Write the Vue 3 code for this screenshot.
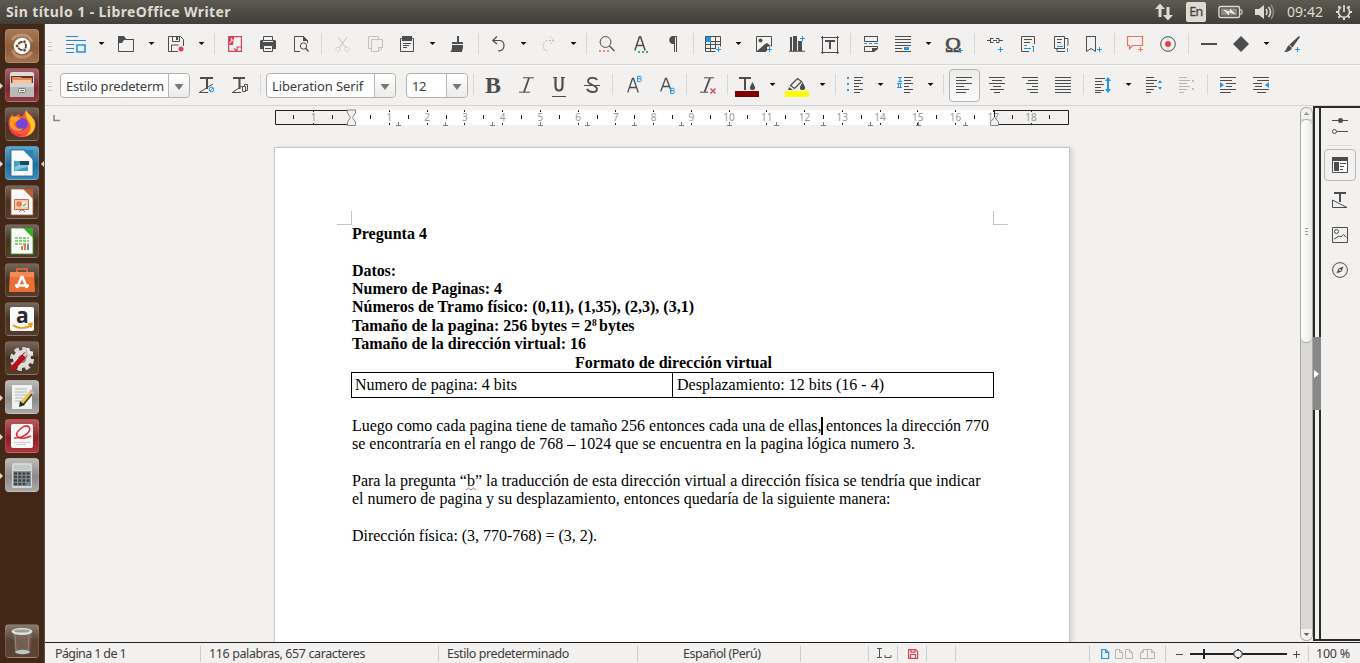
<script setup>
const D = '#4d4d4d'
const B = '#1e96eb'
const R = '#da4453'
const G = '#c2c1c0'

// Spreads a label over its nominal width through letter spacing.
const vFit = {
  mounted(el, { value }) {
    const natural = el.getBoundingClientRect().width
    el.style.letterSpacing = (value - natural) / el.textContent.length + 'px'
  }
}

const path = (d, c = D, w = 1) => `<path d="${d}" fill="none" stroke="${c}" stroke-width="${w}"/>`
const fill = (d, c = D) => `<path d="${d}" fill="${c}"/>`
const glyph = (t, x, y, size, c = D, extra = '', fam = 'Liberation Sans') =>
  `<text x="${x}" y="${y}" font-size="${size}" font-family="${fam}, sans-serif" fill="${c}" ${extra}>${t}</text>`
const plus = (x, y, c = B) => fill(`M${x - 2} ${y}h5v1h-5zM${x} ${y - 2}h1v5h-1z`, c)
const bars = (list, c = D) => fill(list.map(([x, y, w]) => `M${x} ${y}h${w}v1h-${w}z`).join(''), c)

// Turns absolute starts into gaps between neighbours.
function flow(start, list) {
  let end = start
  return list.map(([kind, x, w, body]) => {
    const item = { kind, w, body, gap: x - end }
    end = x + w
    return item
  })
}
const sep = (x) => ['sep', x, 1]
const arr = (x) => ['arrow', x - 3, 6]
const ic = (x, w, body) => ['icon', x, w, body]

const standard = flow(45, [
  ['grip', 48, 4],
  ic(66, 20, bars([[0, 0, 12], [0, 4, 20], [0, 8, 8], [0, 12, 8], [0, 16, 8]], '#2a88c8') + path('M11 9h8v7h-8z', B, 1.6)),
  arr(101.5),
  ic(118, 16, path('M.5 15.500V.5h5l2 3h8v12z') + fill('M0 0h6l2 3h8v1H6L4 7H0z')),
  arr(151.5),
  ic(168, 16, path('M10 15.500H.5V.5h12l3 3V10M4.500 .5v5h7v-5M3.500 15v-6h7') + fill('M8 1h2v3H8z') + `<circle cx="13" cy="13" r="2.500" fill="${R}"/>`),
  arr(201.5),
  sep(214),
  ic(228, 14, fill('M0 0h6v2L5 9H0z', R) + path('M5 .6h8.400v14.800H9.500L6 12.500M.6 8v7.400h8.500V11H13', R, 1.200) + path('M1.500 7.500c2-2 3-4 2-5s1.500 4 3.500 3', '#fff', .9)),
  ic(260, 16, path('M3.500 4V.5h9V4M3.500 9.500h9v6h-9zM5 12.500h6') + fill('M1 4h14l1 1v8h-3V9H3v4H0V5z') + fill('M3 5h10v1H3z', '#f2f1f0')),
  ic(294, 16, path('M6 15.500H.5V.5h9l4 4V7M9.500 .5v4h4') + fill('M9 0l5 5H9z') + `<circle cx="9.500" cy="10" r="3.200" fill="#f2f1f0" stroke="${D}"/>` + path('M11.500 12l3 3.500', D, 1.300)),
  sep(321),
  ic(335, 16, path('M3 1l8 11M12 1L4 12', G) + `<g fill="none" stroke="${G}" stroke-dasharray="1.500 1"><circle cx="3" cy="13.500" r="2.200"/><circle cx="12" cy="13.500" r="2.200"/></g>`),
  ic(368, 15, path('M3 12.500H.5V.5h10V3M3.500 15.500v-12h11v8l-4 4zM10.500 15v-3.500h4', G)),
  ic(400, 14, path('M.5 2.500h13v13H.5z') + fill('M2 0h10v5H2z') + bars([[3, 7, 8], [3, 9, 6], [3, 11, 4]])),
  arr(432.5),
  ic(450, 14, fill('M7 0h2v6h4v2H2V6h5zM2 9h11v2c0 2-1 3-1 5H0c2-1 2-4 2-7z')),
  sep(478),
  ic(492, 13, path('M5 .5L.7 4.500 5 8M1 4.500h6c3 0 5 2 5 5s-2 5.500-6 5.500', D, 1.200)),
  arr(523.5),
  ic(542, 13, `<path d="M8 .5l4.300 4L8 8M12 4.500H7c-4 0-6 2-6 5s2 5.500 5 5.500" fill="none" stroke="${G}" stroke-dasharray="2 1"/>`),
  arr(573.5),
  sep(586),
  ic(599, 17, `<circle cx="6.500" cy="6" r="5.400" fill="none" stroke="${D}"/>` + path('M10.500 10l5 5', D, 1.300) + fill('M0 14h2v2H0zM4 14h2v2H4zM8 14h2v2H8z', '#f08a6c')),
  ic(634, 15, path('M.8 14.500L5.500 .8h1L11.200 14.500M2.500 9.500h7', D, 1.500) + fill('M4 15h2v2H4zM8 15h2v2H8zM12 15h2v2h-2z', '#3bb17a')),
  ic(669, 9, fill('M4 0h4v16H7V1H6v15H5V8H4C-1 8-1 0 4 0z')),
  sep(693),
  ic(705, 17, path('M.5 .5h15v10M.5 .5v15h10M1 5.500h15M1 8.500h15M1 12.500h9M5.500 1v14M10.500 1v12') + fill('M1 1h5v5H1z', B) + plus(13, 13)),
  arr(738.5),
  ic(756, 17, path('M10 15.500H.5V.5h15v10') + '<circle cx="4.500" cy="4.500" r="2" fill="#4d4d4d"/>' + fill('M1 15l8-7 2-1 4 3-4 1v4z') + plus(13, 13)),
  ic(789, 17, fill('M1 1h2v14H1zM4 0h4v15H4zM9 5h4v10H9zM0 14.800h16v1H0z') + plus(13, 2)),
  ic(821, 18, path('M1.500 1.500h15v15h-15zM0 1.500h3M1.500 0v3M15 1.500h3M16.500 0v3M0 16.500h3M1.500 18v-3M15 16.500h3M16.500 18v-3') + fill('M4 4h10v2H10v7H8V6H4z')),
  sep(850),
  ic(864, 15, path('M.5 0v5.500h13V0M.5 .5h13M.5 10.500v5h8l5-3v-2z') + fill('M8 16v-4h6v1l-4 3z') + bars([[0, 7, 3], [5, 7, 3], [10, 7, 4]], B)),
  ic(895, 16, bars([[0, 0, 16], [0, 3, 16], [0, 6, 16], [0, 9, 16], [0, 12, 7], [0, 15, 16]]) + fill('M9 11h5v3H9z', B)),
  arr(928.5),
  ic(945, 20, glyph('Ω', 0, 15.500, 21, D, `textLength="16" lengthAdjust="spacingAndGlyphs" stroke="${D}" stroke-width=".7"`, 'Liberation Serif') + plus(15, 14)),
  sep(974),
  ic(987, 17, path('M0 4.500h3M3 2.500h3.500M3 6.500h3.500M3.500 2v5M6 4.500h4M9 2.500h3v4h-3M12 4.500h4') + plus(13, 13)),
  ic(1021, 15, path('M8 15.500H.5V.5h13V8') + bars([[3, 3, 8], [3, 6, 6]]) + bars([[3, 9, 3], [3, 12, 7]], B) + fill('M11 10h2v6h-1v-5h-1z', B)),
  ic(1054, 16, path('M11 12.500H.5V.5h10V12M3 12v3.500h8M11 2.500h3V9') + bars([[3, 3, 5], [3, 6, 4]]) + bars([[3, 10, 6]], B) + fill('M13 9h1v1h-1zM13 12h1v4h-1z', B)),
  ic(1086, 17, path('M.5 0v15.500l4.500-3 4.500 3V0M.5 .5h9') + plus(13, 13)),
  sep(1114),
  ic(1127, 17, path('M.5 .5h15v9H5.500L2.500 13V9.500h-2z', '#ee7352', 1.200) + plus(13, 13, '#ee7352')),
  ic(1160, 16, `<circle cx="8" cy="8" r="7.300" fill="none" stroke="${D}"/><circle cx="8" cy="8" r="3" fill="${R}"/>`),
  sep(1188),
  ic(1201, 16, fill('M0 7h16v2H0z')),
  ic(1233, 16, fill('M8 0l8 8-8 8-8-8z')),
  arr(1266.5),
  ic(1284, 17, fill('M15 0l1 1-7.500 10.500-3-3zM5 9l3 3c-1 2-3 4-8 4 2-1 2-4 5-7z') + plus(13, 13))
])

const left = bars([[0, 0, 16], [0, 3, 10], [0, 6, 16], [0, 9, 8], [0, 12, 13], [0, 15, 10]])
const half = bars([[0, 0, 8], [0, 3, 11], [0, 6, 8], [0, 9, 11], [0, 12, 8], [0, 15, 5]])

const format = flow(45, [
  ['grip', 48, 4],
  ['combo', 60, 130, { text: 'Estilo predeterm', tw: 98, field: 108 }],
  ic(199, 17, fill('M1 0h13v2H9v10H7V2H1z') + path('M1 15L14 7M0 15.500h9', D) + `<circle cx="12.500" cy="12.500" r="2.300" fill="none" stroke="${B}"/>` + path('M11 14l3-3', B)),
  ic(232, 17, fill('M1 0h12v2H8.500v10h-2V2H1z') + path('M1 15L10 9M0 15.500h9', D, 1) + path('M10.500 9.500h3v5h-3zM12.500 9V7.500h3v6h-2')),
  sep(260),
  ['combo', 266, 130, { text: 'Liberation Serif', tw: 91, field: 108 }],
  ['combo', 406, 62, { text: '12', tw: 14, field: 40 }],
  sep(473),
  ic(485, 17, glyph('B', 0, 16, 23.5, D, 'font-weight="bold" textLength="16" lengthAdjust="spacingAndGlyphs"', 'Liberation Serif')),
  ic(519, 15, path('M4 .8h11M0 15.200h11') + path('M10 1L5 15', D, 1.800)),
  ic(552, 14, path('M3.500 0v9c0 6 7 6 7 0V0', D, 2.200) + fill('M1 0h4v1H1zM9 0h4v1H9zM0 19h14v1H0z')),
  ic(584, 16, path('M13 3C12 0 4 0 4 4s9 4 9 8-8 4-10 0', D, 1.800) + fill('M0 8h16v1H0z')),
  sep(612),
  ic(627, 17, path('M.7 15.500L5.500 1.500h1L11.300 15.500M2.500 10.500h7', D, 1.300) + path('M10.500 4.500v-5.200h2.500c2 0 2 2.300 0 2.400h-2.500M13 2c2 0 2 2.500 0 2.500h-2.500', B)),
  ic(660, 16, path('M.7 14.500L5.500 1.500h1L11.300 14.500M2.500 9.500h7', D, 1.300) + path('M10.500 16.500v-5.200h2.500c2 0 2 2.300 0 2.400h-2.500M13 14c2 0 2 2.500 0 2.500h-2.500', B)),
  sep(686),
  ic(700, 16, path('M4 .8h10M0 15.200h8') + path('M10 1L4.500 15', D, 1.800) + path('M10.500 11.500l5 5M15.500 11.500l-5 5', R, 1.400)),
  sep(727),
  ic(735, 24, fill('M4 0h12v2h-5v11H9V2H4zM17.500 5c2 4 3 5 2.500 6.500-.8 2-4.200 2-5 0-.4-1.500.5-2.500 2.500-6.500z') + fill('M0 14h24v6H0z', '#800000')),
  arr(772.5),
  ic(785, 24, path('M5.500 8.500l7-7 4 3-7 7z', D, 1.300) + fill('M4 10l4 3H3zM17.500 5c2 4 3 5 2.500 6.500-.8 2-4.200 2-5 0-.4-1.500.5-2.500 2.500-6.500z') + fill('M0 14h24v6H0z', '#ffff00')),
  arr(822.5),
  sep(835),
  ic(847, 16, bars([[7, 0, 9], [7, 3, 7], [7, 6, 9], [7, 9, 5], [7, 12, 9], [7, 15, 6]]) + fill('M0 0h2v2H0zM0 6h2v2H0zM0 12h2v2H0z', B)),
  arr(880.5),
  ic(897, 16, bars([[7, 0, 9], [7, 3, 7], [7, 6, 9], [7, 9, 5], [7, 12, 9], [7, 15, 6]]) + fill('M1 0h4v1H3.500v3H5v1H1V4h1.500V1H1zM0 6h5v1H4v3h1v1H0v-1h1V7H0zM2 7v3h1V7z', B)),
  arr(930.5),
  sep(943),
  ['pressed', 949, 31, left],
  ic(989, 16, bars([[0, 0, 16], [3, 3, 10], [0, 6, 16], [4, 9, 8], [1, 12, 14], [5, 15, 6]])),
  ic(1022, 16, bars([[0, 0, 16], [6, 3, 10], [4, 6, 12], [10, 9, 6], [5, 12, 11], [8, 15, 8]])),
  ic(1055, 16, bars([[0, 0, 16], [0, 3, 16], [0, 6, 16], [0, 9, 16], [0, 12, 16], [0, 15, 16]])),
  sep(1083),
  ic(1095, 17, bars([[0, 1, 10], [0, 4, 7], [0, 7, 9], [0, 10, 6], [0, 13, 9], [0, 15, 6]]) + fill('M13 0l3 4h-2v8h2l-3 4-3-4h2V4h-2z', B)),
  arr(1128.5),
  ic(1146, 17, half + fill('M14 3l2 3h-4zM14 13l2-3h-4z', B)),
  ic(1179, 17, `<g opacity=".35">${half}</g>` + fill('M13 3h2v2h-2zM13 11h2v2h-2z', '#bdbcbb')),
  sep(1207),
  ic(1220, 17, bars([[0, 0, 16], [0, 3, 12], [6, 6, 10], [6, 9, 6], [0, 12, 16], [0, 15, 11]]) + fill('M0 5l4 3-4 3z', B)),
  ic(1253, 17, bars([[0, 0, 16], [4, 3, 12], [0, 6, 9], [2, 9, 7], [0, 12, 16], [4, 15, 9]]) + fill('M16 5l-4 3 4 3z', B))
])

const doc = (edge, fold) =>
  `<path d="M6 4h14l8 8v18H6z" fill="#fafafa" stroke="${edge}" stroke-width=".8"/><path d="M18 4h10v10z" fill="${fold}"/>`
const apps = [
  { tone: 'ubuntu', run: 0, art: '<path d="M7 11C11 4 24 4 27 13M27 23C21 31 9 29 8 21" stroke="#d8b698" stroke-width="3" fill="none" opacity=".5"/><circle cx="17" cy="17" r="8.300" fill="#fff"/><circle cx="17" cy="17" r="4" fill="none" stroke="#6a4630" stroke-width="1.900"/><g fill="#6a4630" stroke="#fff" stroke-width=".8"><circle cx="12" cy="17" r="1.800"/><circle cx="19.500" cy="12.700" r="1.800"/><circle cx="19.500" cy="21.300" r="1.800"/></g>' },
  { tone: 'wine', run: 1, art: '<rect x="5" y="4" width="24" height="13" rx="2" fill="#dedbd8"/><rect x="6" y="8" width="22" height="8" fill="#59392c"/><path d="M7 9h9l1 1h10v6H7z" fill="#e78b51"/><path d="M8 12h18v4H8z" fill="#f8c59b"/><path d="M5 15h24v14H5z" fill="#b9b9b7"/><path d="M5 15h24v4H5z" fill="#d4d3d1"/><rect x="13.500" y="20.500" width="7" height="4" rx="1" fill="#eee" stroke="#777"/><path d="M15 22.500h4" stroke="#666"/>' },
  { tone: 'dark', run: 0, art: '<path d="M29 12c5 10-3 18-12 18C7 30 2 22 4 12l3-5 2 4 4-4 4 3 4-7c2 4 6 4 7 9z" fill="#ff5a36"/><path d="M21 3c2 5 8 7 9 14 0 6-4 11-9 12 5-5 6-10 3-14-2-3-4-7-3-12z" fill="#ffc928"/><path d="M4 14c1 10 9 15 17 13-3 3-10 3-14-1-3-3-4-8-3-12z" fill="#f5325b"/><circle cx="17" cy="17" r="6" fill="#7545d8"/><path d="M6 10c5-2 7 0 10 2-3 0-4 3-7 4 0 5 5 7 9 5-3 5-13 3-13-4z" fill="#ffa020"/>' },
  { tone: 'blue', run: 2, art: doc('#14648f', '#2a82b4') + '<path d="M9 15h14v10H9z" fill="#429fc8"/><path d="M10 21l5-3 8 1v2l-6 1-7 3z" fill="#82c9e1"/><path d="M15 15h9v4h-9z" fill="#194a60"/>' },
  { tone: 'dark', run: 0, art: doc('#a75c39', '#b66238') + '<path d="M9.500 14.500h14v10h-14z" fill="#f5cbb5" stroke="#c66d43"/><circle cx="14" cy="19" r="2.800" fill="#e17d4f"/><path d="M17 17h5v5h-5z" fill="#e9f3e8"/><path d="M18 20l1 1 2-3" stroke="#479646" fill="none"/><path d="M14 27l2-2h2l2 2" stroke="#777" fill="none"/>' },
  { tone: 'dark', run: 0, art: doc('#2b982b', '#38af2c') + '<path d="M10 13h14v9H10z" fill="#8dd07c"/><path d="M10 15.500h14M10 18.500h14M10 21.500h8M13.500 13v11M17.500 13v9M21.500 13v9" stroke="#fff"/><path d="M16 26v-4h2v4zM19 26v-6h2v6z" fill="#e4794d"/><path d="M22 26v-5h2v5z" fill="#4a91bd"/>' },
  { tone: 'dark', run: 0, art: '<path d="M12 9V6h10v3" fill="none" stroke="#d46339" stroke-width="2"/><path d="M5 9h24l1 20H4z" fill="#e96f34"/><path d="M5 9h24v5H5z" fill="#f18a57"/><path d="M12 25l4.500-11h1L22 25M10 22.500h14" fill="none" stroke="#fff" stroke-width="2.500"/>' },
  { tone: 'dark', run: 0, art: '<rect x="5" y="5" width="24" height="24" rx="2" fill="#fafafa"/><text x="11" y="21" font-family="Open Sans, sans-serif" font-size="21" font-weight="bold" fill="#292929">a</text><path d="M8 23c5 4 13 4 18 0M23 22l4-.5-1 4" stroke="#f39a18" stroke-width="1.700" fill="none"/>' },
  { tone: 'dark', run: 0, art: '<circle cx="17" cy="18" r="10" fill="none" stroke="#d9d8d6" stroke-width="4" stroke-dasharray="4.500 3.350"/><circle cx="17" cy="18" r="9" fill="#deddda"/><circle cx="17" cy="18" r="4" fill="#8a827e"/><path d="M8 27L20 14" stroke="#b4101a" stroke-width="5" stroke-linecap="round"/><path d="M19 15l5-5" stroke="#c7c7c5" stroke-width="3.500"/><path d="M23 7c0 5 2 5 5 5" stroke="#e9e8e6" stroke-width="3" fill="none"/>' },
  { tone: 'grey', run: 1, art: '<path d="M7 5h20v24H7z" fill="#f1f1ef"/><path d="M10 9h12M10 12h12M10 15h12M10 18h8M10 21h7" stroke="#b4b4b2"/><path d="M17 24l9-11" stroke="#e7c94a" stroke-width="5"/><path d="M18 25l9-11" stroke="#3a372f" stroke-width="1.500"/><path d="M26 13l2-2" stroke="#d7a4d2" stroke-width="5"/><path d="M15 21l5 4-6 2z" fill="#292929"/>' },
  { tone: 'red', run: 1, art: '<rect x="6" y="5" width="22" height="24" rx="2" fill="#f8f8f7"/><path d="M9 19c12 0 18-8 15-11-4-4-14 5-12 9 2 4 10 2 14 0" fill="none" stroke="#d9303a" stroke-width="1.600"/><path d="M9 23.500h16M11 25.500h10" stroke="#ccc"/>' },
  { tone: 'grey', run: 1, art: '<rect x="7" y="5" width="20" height="25" rx="1.500" fill="#d5d5d3"/><path d="M9 7h16v5H9z" fill="#c1c9c6"/><path d="M8 13h18v15H8z" fill="#8b9293"/><path d="M9 15.500h16M9 19h16M9 22.500h16M9 26h16" stroke="#3b4447" stroke-width="2.300" stroke-dasharray="3 1.200"/><path d="M21.500 25h4v3h-4z" fill="#5f91ad"/>' }
]

const cm = 37.74
const numbers = Array.from({ length: 18 }, (_, i) => ({ n: i + 1, x: 76.7 + (i + 1) * cm }))
const halves = Array.from({ length: 19 }, (_, i) => 76.7 + (i + 0.5) * cm)
const margins = [18.5, 57.5]
const tabs = Array.from({ length: 13 }, (_, i) => Math.floor(76 + (i + 1) * 47.25))
</script>

<template>
  <div class="screen">
    <header class="top">
      <span v-fit="225" class="title">Sin título 1 - LibreOffice Writer</span>
      <div class="tray">
        <svg width="18" height="18" viewBox="0 0 18 18" fill="#dfdbd2"><path d="M5 .5L10 6H6.500v8h-3V6H0zM13 17.500L8 12h3.500V4h3v8H18z" /></svg>
        <span class="lang">En</span>
        <svg class="battery" width="25" height="14" viewBox="0 0 25 14"><rect x="1" y="1.500" width="20.500" height="11" rx="1.500" fill="none" stroke="#dfdbd2" stroke-width="1.400" /><path d="M22 5h2v4h-2" fill="none" stroke="#dfdbd2" /><path d="M3 3.500h16v7H3z" fill="#8d8a83" /><path d="M5 4.500l7 2V3.500l6 6-7-2v3z" fill="#f0ece3" /></svg>
        <svg class="sound" width="20" height="16" viewBox="0 0 20 16"><path d="M0 5h4l5-4v14l-5-4H0z" fill="#dfdbd2" /><path d="M11 5q2 3 0 6M13.500 3q4 5 0 10" fill="none" stroke="#dfdbd2" stroke-width="1.600" /><path d="M16 1q5 7 0 14" fill="none" stroke="#8d8a83" stroke-width="1.600" /></svg>
        <span v-fit="36" class="clock">09:42</span>
        <svg class="cog" width="18" height="18" viewBox="0 0 18 18" fill="none" stroke="#dfdbd2"><path d="M6 4.200a5.500 5.500 0 1 0 6 0" stroke-width="1.500" /><path d="M9 2V9" stroke-width="1.700" /><g stroke-width="2"><path d="M3.300 3.300l1.700 1.700M14.700 3.300L13 5M1 9h2.500M14.500 9H17M3.300 14.700l1.700-1.700M14.700 14.700L13 13M9 14.500V17" /></g></svg>
      </div>
    </header>

    <div class="desk">
      <nav class="launcher">
        <div v-for="(a, i) in apps" :key="i" class="app" :class="a.tone">
          <svg width="34" height="34" viewBox="0 0 34 34" v-html="a.art"></svg>
          <i v-if="a.run" class="pip"></i>
          <i v-if="a.run === 2" class="pip here"></i>
        </div>
        <div class="app bin">
          <svg width="34" height="34" viewBox="0 0 34 34"><path d="M8 8l2 20c4 3 11 3 15 0l2-20z" fill="#8b7b72" opacity=".5" /><path d="M10 9l1 18M24 9l-1 18" stroke="#a69a92" opacity=".6" /><ellipse cx="17" cy="7.500" rx="10.500" ry="3.500" fill="#dfe2df" /><ellipse cx="17" cy="7" rx="8" ry="1.600" fill="#9d9e9a" /><ellipse cx="17.500" cy="28" rx="7.500" ry="2.200" fill="#bcc5c0" /></svg>
        </div>
      </nav>

      <main class="writer">
        <div v-for="(row, r) in [standard, format]" :key="r" class="bar" :class="{ second: r === 1 }">
          <div v-for="(t, i) in row" :key="i" :class="t.kind" :style="{ marginLeft: t.gap + 'px', width: t.w + 'px' }">
            <svg v-if="t.kind === 'icon'" :width="t.w" height="20" :viewBox="`0 0 ${t.w} 20`" v-html="t.body"></svg>
            <svg v-else-if="t.kind === 'pressed'" width="16" height="16" viewBox="0 0 16 16" v-html="t.body"></svg>
            <template v-else-if="t.kind === 'combo'">
              <div class="field" :style="{ width: t.body.field + 'px' }"><span v-fit="t.body.tw">{{ t.body.text }}</span></div>
              <div class="drop"><i></i></div>
            </template>
          </div>
        </div>

        <div class="work">
          <section class="canvas">
            <div class="rule">
              <svg class="corner" width="8" height="7" viewBox="0 0 8 7"><path d="M1 0v5.500h6" fill="none" stroke="#8b8a89" stroke-width="1.600" /></svg>
              <svg class="ruler" width="795" height="18" viewBox="0 0 795 18">
                <rect x="76" y="0" width="643" height="15" fill="#fff" />
                <path d="M76 .5H.5v14H76M719 .5h74.500v14H719" fill="none" stroke="#222" />
                <g stroke="#222">
                  <path v-for="x in halves" :key="x" :d="`M${Math.floor(x) + 0.5} 5v4`" />
                  <path v-for="x in margins" :key="x" :d="`M${x} 5v4`" />
                  <path v-for="n in numbers" :key="n.n" :d="`M${Math.floor(n.x) + 0.5} 0v2M${Math.floor(n.x) + 0.5} 13v2`" />
                  <path d="M38.500 0v2M38.500 13v2" />
                </g>
                <g class="digits">
                  <text x="38.500" y="11">1</text>
                  <text v-for="n in numbers" :key="n.n" :x="n.x" y="11">{{ n.n }}</text>
                </g>
                <path v-for="x in tabs" :key="x" :d="`M${x - 2} 15.500h5M${x + 0.5} 12v3`" stroke="#7e7d7c" />
                <path d="M72.500 0h8v3l-3 4.500 3 4.500v3.500h-8V12l3-4.500-3-4.500zM715.500 15.500V12l4-5 4 5v3.500z" fill="#f2f1f0" stroke="#888" />
                <path d="M719.500 7V.5" stroke="#222" />
              </svg>
            </div>
            <article class="page">
              <div class="marks"><i></i><i class="r"></i></div>
              <div class="text">
                <p><b v-fit="75">Pregunta 4</b></p>
                <p></p>
                <p><b v-fit="44">Datos:</b></p>
                <p><b v-fit="150">Numero de Paginas: 4</b></p>
                <p><b v-fit="342">Números de Tramo físico: (0,11), (1,35), (2,3), (3,1)</b></p>
                <p><b v-fit="240">Tamaño de la pagina: 256 bytes = 2</b><b class="sup">8</b><b v-fit="35.500">bytes</b></p>
                <p><b v-fit="234">Tamaño de la dirección virtual: 16</b></p>
                <p class="mid"><b v-fit="197">Formato de dirección virtual</b></p>
                <div class="grid">
                  <div><span v-fit="162">Numero de pagina: 4 bits</span></div>
                  <div><span v-fit="207">Desplazamiento: 12 bits (16 - 4)</span></div>
                </div>
                <p></p>
                <p><span v-fit="469.500">Luego como cada pagina tiene de tamaño 256 entonces cada una de ellas,</span><i class="caret"></i><span v-fit="163" class="after">entonces la dirección 770</span></p>
                <p><span v-fit="563">se encontraría en el rango de 768 – 1024 que se encuentra en la pagina lógica numero 3.</span></p>
                <p></p>
                <p class="typo"><span v-fit="628.500">Para la pregunta “b” la traducción de esta dirección virtual a dirección física se tendría que indicar</span><svg width="10" height="4" viewBox="0 0 10 4"><path d="M0 3l2.500-2L5 3l2.500-2L10 3" fill="none" stroke="#8a5a5a" stroke-width=".8" /></svg></p>
                <p><span v-fit="538.500">el numero de pagina y su desplazamiento, entonces quedaría de la siguiente manera:</span></p>
                <p></p>
                <p><span v-fit="245">Dirección física: (3, 770-768) = (3, 2).</span></p>
              </div>
            </article>
          </section>

          <div class="scroll">
            <div class="btn up"><i></i></div>
            <div class="thumb"><i></i><i></i><i></i></div>
            <div class="trough"></div>
            <div class="btn down"><i></i></div>
          </div>

          <div class="splitter"><div class="handle"><i></i></div></div>

          <aside class="side">
            <svg width="16" height="18" viewBox="0 0 16 18"><path d="M0 3.500h16M5 14.500h11" stroke="#4d4d4d" /><circle cx="8.500" cy="3.500" r="2.500" fill="#4d4d4d" /><circle cx="2.500" cy="14.500" r="2" fill="none" stroke="#4d4d4d" /></svg>
            <hr />
            <div class="tab on"><svg width="16" height="16" viewBox="0 0 16 16"><path d="M.5 .5h15v15H.5z" fill="#fff" stroke="#4d4d4d" /><path d="M0 0h16v4H0zM2 5h5v9H2z" fill="#4d4d4d" /><path d="M8 6.500h6M8 9.500h4M8 12.500h3" stroke="#4d4d4d" /></svg></div>
            <div class="tab"><svg width="16" height="17" viewBox="0 0 16 17"><path d="M2 0h12v2H9v8H7V2H2z" fill="#4d4d4d" /><path d="M.5 8v7.500H15z" fill="none" stroke="#4d4d4d" /></svg></div>
            <div class="tab"><svg width="16" height="16" viewBox="0 0 16 16" fill="none" stroke="#4d4d4d"><path d="M.5 .5h15v15H.5zM2 12l2-1 3-2 2 1 2.500-2.500 3 3" /><circle cx="4.500" cy="4.500" r="2" /></svg></div>
            <div class="tab"><svg width="16" height="16" viewBox="0 0 16 16"><circle cx="8" cy="8" r="7.400" fill="none" stroke="#4d4d4d" /><path d="M11.500 4.500L9.500 9.500l-5 2 2-5z" fill="#4d4d4d" /><circle cx="8" cy="8" r="1" fill="#f2f1f0" /></svg></div>
          </aside>
        </div>

        <footer class="status">
          <div class="s1"><span v-fit="71">Página 1 de 1</span></div>
          <div class="s2"><span v-fit="156">116 palabras, 657 caracteres</span></div>
          <div class="s3"><span v-fit="122">Estilo predeterminado</span></div>
          <div class="s4"><span v-fit="77.500">Español (Perú)</span></div>
          <div class="s5"></div>
          <div class="s6"><svg width="15" height="11" viewBox="0 0 15 11"><path d="M0 .5h5M2.500 0v10M0 9.500h5M8 7v2.500h6V7" fill="none" stroke="#4d4d4d" /></svg></div>
          <div class="s7"><svg width="10" height="10" viewBox="0 0 10 10"><path d="M.6 .6h7l2 2v6.800h-9zM3 .6v2.600h4V.6M2.500 9V5.500h5V9" fill="none" stroke="#da4453" stroke-width="1.200" /></svg></div>
          <div class="s8"></div>
          <div class="s9"></div>
          <div class="s10">
            <svg width="56" height="10" viewBox="0 0 56 10" fill="none"><path d="M.7 .5h4l3 3v6h-7zM4.500 .5v3h3" stroke="#1e96eb" stroke-width="1.200" /><g stroke="#b7b6b5"><path d="M14.500 .5h4l3 3v6h-7zM18.500 .5v3h3M24.500 .5h4l3 3v6h-7zM28.500 .5v3h3M46.500 9.500h-7v-6l3-3h4zM42.500 .5v3h-3M46.500 .5h4l3 3v6h-7M50.500 .5v3h3" /></g></svg>
          </div>
          <div class="s11">
            <svg width="126" height="12" viewBox="0 0 126 12"><path d="M1 6.500h7M118 6.500h7M121.500 3v7" stroke="#4d4d4d" /><path d="M15 6h97M29 1v10M63 1v10" stroke="#222" stroke-width="2" /><path d="M61 2.500h4l2 2v3l-2 2h-4l-2-2v-3z" fill="#f2f1f0" stroke="#555" stroke-width="1.200" /></svg>
          </div>
          <div class="s12"><span v-fit="34">100 %</span></div>
        </footer>
      </main>
    </div>
  </div>
</template>

<style>
html, body { margin: 0; overflow: hidden; }
</style>

<style scoped>
.screen { width: 1360px; height: 663px; display: flex; flex-direction: column; background: #f2f1f0; font: 12.5px/16px "Noto Sans", sans-serif; color: #3c3c3c; overflow: hidden; }
.screen * { box-sizing: border-box; }
svg { display: block; flex: none; overflow: visible; }
span, b { display: inline-block; white-space: pre; flex: none; }
.top { height: 24px; flex: none; display: flex; align-items: center; justify-content: space-between; padding: 0 7px 0 6px; background: linear-gradient(#5d5a50, #403e39); color: #dfdbd2; }
.title { font-size: 14px; font-weight: 700; }
.tray { display: flex; align-items: center; }
.lang { width: 20px; height: 20px; margin-left: 13px; border-radius: 2px; background: #dfdbd2; color: #47453f; text-align: center; line-height: 20px; letter-spacing: -0.5px; -webkit-text-stroke: .3px #47453f; }
.battery { margin-left: 12px; }
.sound { margin-left: 12px; }
.clock { margin-left: 12px; font-size: 14px; }
.cog { margin-left: 12px; }

.desk { flex: 1; display: flex; min-height: 0; }
.launcher { width: 45px; flex: none; display: flex; flex-direction: column; gap: 5px; padding: 5px 0 5px 5px; background: #432818; border-right: 1px solid #5f5145; }
.app { width: 34px; height: 34px; flex: none; position: relative; border-radius: 4px; border: 1px solid #ffffff20; background: linear-gradient(#75665c, #49331f 50%, #543b2c); }
.app svg { margin: -1px; }
.ubuntu { background: linear-gradient(#a47959, #8d5c38 55%, #a2734f); }
.wine { background: linear-gradient(#a46067, #792833 60%, #8f3a47); }
.blue { background: linear-gradient(#5fa2c5, #236f9a 55%, #398dbb); }
.red { background: linear-gradient(#b95a60, #8c2028 55%, #ad343d); }
.grey { background: linear-gradient(#bcbab9, #8c8987 55%, #aaa7a5); }
.bin { margin-top: auto; background: linear-gradient(#897a71, #5a4130 50%, #5a4537); }
.pip { position: absolute; left: -6px; top: 14px; border: 3px solid transparent; border-left-color: #ddd7d2; border-right: 0; }
.here { left: 35px; border: 3px solid transparent; border-right-color: #ddd7d2; border-left: 0; }

.writer { flex: 1; display: flex; flex-direction: column; min-width: 0; }
.bar { height: 41px; flex: none; display: flex; align-items: flex-start; padding-top: 12px; border-bottom: 1px solid #d6d4d2; }
.second { padding-top: 11px; border-top: 1px solid #fbfbfa; }
.bar > div { flex: none; }
.sep { height: 21px; margin-top: -3px; background: #d9d7d5; }
.grip { height: 9px; margin-top: 6px; border-top: 1px solid #c9c7c5; border-bottom: 1px solid #c9c7c5; background: linear-gradient(transparent 3px, #c9c7c5 3px 4px, transparent 4px); }
.second .grip { margin-top: 5px; }
.arrow { height: 3px; margin-top: 6px; background: #111; clip-path: polygon(0 0, 100% 0, 50% 100%); }
.combo { height: 25px; margin-top: -4px; display: flex; border: 1px solid #b3b0ac; border-radius: 4px; background: #fff; font-size: 13px; }
.field { height: 23px; flex: none; display: flex; align-items: center; padding-left: 5px; border-right: 1px solid #b8b5b2; }
.drop { flex: 1; display: grid; place-items: center; background: linear-gradient(#fff, #ecebea); border-radius: 0 4px 4px 0; }
.drop i { width: 9px; height: 6px; margin-top: 3px; background: #777; clip-path: polygon(0 0, 100% 0, 50% 100%); }
.pressed { height: 33px; margin-top: -8px; padding: 7px 0 0 6px; border: 1px solid #b5b2af; border-radius: 4px; background: linear-gradient(#ececeb, #fbfbfb); }

.work { flex: 1; min-height: 0; display: flex; }
.canvas { flex: 1; display: flex; flex-direction: column; min-width: 0; overflow: hidden; }
.rule { height: 42px; flex: none; display: flex; padding: 4px 0 0 8px; }
.corner { margin-top: 5px; }
.ruler { margin-left: 214px; }
.digits { font: 10px "Noto Sans", sans-serif; fill: #9a9998; text-anchor: middle; }
.page { width: 794px; flex: 1; margin-left: 230px; background: #fff; box-shadow: 0 0 0 1px #c8c7c6, 2px 1px 5px 1px #cfcecd; padding: 0 62px; }
.marks { height: 76.8px; padding-top: 63px; display: flex; justify-content: space-between; }
.marks i { width: 15px; height: 14px; border: solid #c4c4c4; border-width: 0 1px 1px 0; }
.marks i.r { border-width: 0 0 1px 1px; margin-right: -1px; }
.text { width: 643px; margin-left: 15px; font: 16px/18.4px "Liberation Serif", serif; color: #000; }
p { margin: 0; height: 18.4px; display: flex; }
.mid { justify-content: center; }
.sup { font-size: 9.3px; line-height: 13px; width: 7px; }
.grid { display: grid; grid-template-columns: 321px 1fr; width: 643px; height: 26.5px; margin: 0 0 0 -1px; border: 1px solid #000; }
.grid div { padding: 3px 0 0 3px; }
.grid div + div { padding-left: 4px; border-left: 1px solid #000; margin-left: -1px; }
.caret { width: 2px; height: 18px; margin-left: -1px; background: #000; }
.after { margin-left: 3.5px; }
.typo { position: relative; }
.typo svg { position: absolute; left: 114px; top: 15px; }

.scroll { width: 13px; flex: none; display: flex; flex-direction: column; border: solid #aaa8a2; border-width: 0 1px; background: #d9d8d4; border-radius: 6px; margin: 1px 0; }
.btn { height: 12px; display: grid; place-items: center; background: #f2f1f0; flex: none; }
.btn i { width: 6px; height: 3px; background: #999; clip-path: polygon(50% 0, 100% 100%, 0 100%); }
.up { border-radius: 6px 6px 0 0; border-top: 1px solid #aaa; }
.down { border-radius: 0 0 6px 6px; border-bottom: 1px solid #aaa; }
.down i { background: #666; clip-path: polygon(0 0, 100% 0, 50% 100%); }
.thumb { height: 224px; flex: none; border: solid #aaa; border-width: 1px 0; border-radius: 6px; background: linear-gradient(90deg, #fff, #ebeae9); display: flex; flex-direction: column; align-items: center; justify-content: center; gap: 2px; }
.thumb i { width: 3px; height: 1px; background: #999; }
.trough { flex: 1; }
.splitter { width: 8px; flex: none; margin: 0 0 1px; border: 2px solid #2b2b2a; display: flex; flex-direction: column; background: #f2f1f0; }
.handle { width: 8px; height: 73px; margin: 229px 0 0 -2px; background: #888; display: flex; align-items: center; }
.handle i { margin-left: 1px; border: 4px solid transparent; border-left: 5px solid #fff; border-right: 0; }
.side { width: 39px; flex: none; margin-bottom: 1px; padding-right: 1px; border: solid #2b2b2a; border-width: 2px 0; display: flex; flex-direction: column; align-items: center; padding-top: 9px; }
hr { width: 24px; margin: 10px 0 3px; border: 0; border-top: 1px solid #dcdad8; }
.tab { width: 32px; height: 32px; flex: none; margin-bottom: 3px; display: grid; place-items: center; }
.on { border: 1px solid #bab8b6; border-radius: 4px; }

.status { height: 21px; flex: none; border-top: 1px solid #222; display: flex; align-items: center; padding-top: 1px; }
.status > div { height: 16px; flex: none; display: flex; align-items: center; border-right: 1px solid #cfcdcb; }
.s1 { width: 156px; padding-left: 10px; }
.s2 { width: 238px; padding-left: 8px; }
.s3 { width: 199px; padding-left: 8px; }
.s4 { width: 163px; padding-left: 45px; }
.s5 { width: 68px; }
.s6 { width: 29px; padding-left: 8px; }
.s7 { width: 29px; padding-left: 10px; }
.s8 { width: 29px; }
.s9 { width: 134px; }
.s10 { width: 76px; padding-left: 11px; }
.s11 { width: 143px; padding-left: 9px; }
.status .s12 { padding-left: 7px; border-right: 0; }
</style>
